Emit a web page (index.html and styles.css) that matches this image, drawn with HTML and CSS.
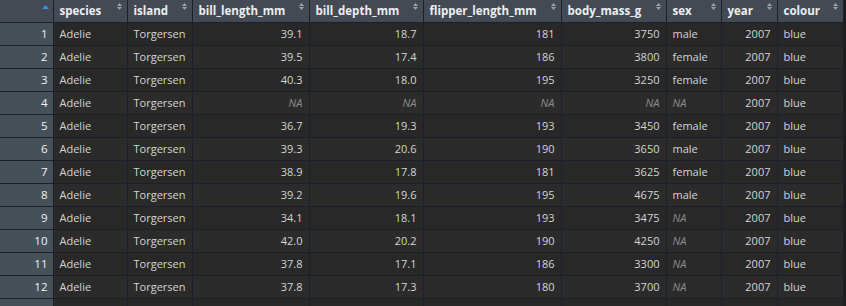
FILE: index.html
```html
<!DOCTYPE html>
<html>
<head>
<meta charset="utf-8">
<link rel="stylesheet" href="styles.css">
</head>
<body>
<div class="viewer">
<table class="grid">
<colgroup>
<col class="c-rn"><col class="c-species"><col class="c-island"><col class="c-bl"><col class="c-bd"><col class="c-fl"><col class="c-bm"><col class="c-sex"><col class="c-year"><col class="c-colour">
</colgroup>
<thead>
<tr>
<th class="rn-head"><div class="th-in th-right"><svg class="asc" width="7" height="4" viewBox="0 0 7 4"><polygon points="0,4 3.5,0 7,4" fill="#3d8ee8"/></svg></div></th>
<th><div class="th-in"><span>species</span><svg class="sort" width="5" height="7" viewBox="0 0 5 7"><polygon points="0,3 2.5,0 5,3" /><polygon points="0,4 2.5,7 5,4"/></svg></div></th>
<th><div class="th-in"><span>island</span><svg class="sort" width="5" height="7" viewBox="0 0 5 7"><polygon points="0,3 2.5,0 5,3" /><polygon points="0,4 2.5,7 5,4"/></svg></div></th>
<th><div class="th-in"><span>bill_length_mm</span><svg class="sort" width="5" height="7" viewBox="0 0 5 7"><polygon points="0,3 2.5,0 5,3" /><polygon points="0,4 2.5,7 5,4"/></svg></div></th>
<th><div class="th-in"><span>bill_depth_mm</span><svg class="sort" width="5" height="7" viewBox="0 0 5 7"><polygon points="0,3 2.5,0 5,3" /><polygon points="0,4 2.5,7 5,4"/></svg></div></th>
<th><div class="th-in"><span>flipper_length_mm</span><svg class="sort" width="5" height="7" viewBox="0 0 5 7"><polygon points="0,3 2.5,0 5,3" /><polygon points="0,4 2.5,7 5,4"/></svg></div></th>
<th><div class="th-in"><span>body_mass_g</span><svg class="sort" width="5" height="7" viewBox="0 0 5 7"><polygon points="0,3 2.5,0 5,3" /><polygon points="0,4 2.5,7 5,4"/></svg></div></th>
<th><div class="th-in"><span>sex</span><svg class="sort" width="5" height="7" viewBox="0 0 5 7"><polygon points="0,3 2.5,0 5,3" /><polygon points="0,4 2.5,7 5,4"/></svg></div></th>
<th><div class="th-in"><span>year</span><svg class="sort" width="5" height="7" viewBox="0 0 5 7"><polygon points="0,3 2.5,0 5,3" /><polygon points="0,4 2.5,7 5,4"/></svg></div></th>
<th><div class="th-in"><span>colour</span><svg class="sort" width="5" height="7" viewBox="0 0 5 7"><polygon points="0,3 2.5,0 5,3" /><polygon points="0,4 2.5,7 5,4"/></svg></div></th>
</tr>
</thead>
<tbody>
<tr><td class="rn">1</td><td>Adelie</td><td>Torgersen</td><td class="num">39.1</td><td class="num">18.7</td><td class="num">181</td><td class="num">3750</td><td>male</td><td class="num">2007</td><td>blue</td></tr>
<tr><td class="rn">2</td><td>Adelie</td><td>Torgersen</td><td class="num">39.5</td><td class="num">17.4</td><td class="num">186</td><td class="num">3800</td><td>female</td><td class="num">2007</td><td>blue</td></tr>
<tr><td class="rn">3</td><td>Adelie</td><td>Torgersen</td><td class="num">40.3</td><td class="num">18.0</td><td class="num">195</td><td class="num">3250</td><td>female</td><td class="num">2007</td><td>blue</td></tr>
<tr><td class="rn">4</td><td>Adelie</td><td>Torgersen</td><td class="num na">NA</td><td class="num na">NA</td><td class="num na">NA</td><td class="num na">NA</td><td class="na">NA</td><td class="num">2007</td><td>blue</td></tr>
<tr><td class="rn">5</td><td>Adelie</td><td>Torgersen</td><td class="num">36.7</td><td class="num">19.3</td><td class="num">193</td><td class="num">3450</td><td>female</td><td class="num">2007</td><td>blue</td></tr>
<tr><td class="rn">6</td><td>Adelie</td><td>Torgersen</td><td class="num">39.3</td><td class="num">20.6</td><td class="num">190</td><td class="num">3650</td><td>male</td><td class="num">2007</td><td>blue</td></tr>
<tr><td class="rn">7</td><td>Adelie</td><td>Torgersen</td><td class="num">38.9</td><td class="num">17.8</td><td class="num">181</td><td class="num">3625</td><td>female</td><td class="num">2007</td><td>blue</td></tr>
<tr><td class="rn">8</td><td>Adelie</td><td>Torgersen</td><td class="num">39.2</td><td class="num">19.6</td><td class="num">195</td><td class="num">4675</td><td>male</td><td class="num">2007</td><td>blue</td></tr>
<tr><td class="rn">9</td><td>Adelie</td><td>Torgersen</td><td class="num">34.1</td><td class="num">18.1</td><td class="num">193</td><td class="num">3475</td><td class="na">NA</td><td class="num">2007</td><td>blue</td></tr>
<tr><td class="rn">10</td><td>Adelie</td><td>Torgersen</td><td class="num">42.0</td><td class="num">20.2</td><td class="num">190</td><td class="num">4250</td><td class="na">NA</td><td class="num">2007</td><td>blue</td></tr>
<tr><td class="rn">11</td><td>Adelie</td><td>Torgersen</td><td class="num">37.8</td><td class="num">17.1</td><td class="num">186</td><td class="num">3300</td><td class="na">NA</td><td class="num">2007</td><td>blue</td></tr>
<tr><td class="rn">12</td><td>Adelie</td><td>Torgersen</td><td class="num">37.8</td><td class="num">17.3</td><td class="num">180</td><td class="num">3700</td><td class="na">NA</td><td class="num">2007</td><td>blue</td></tr>
<tr class="partial"><td class="rn"></td><td></td><td></td><td></td><td></td><td></td><td></td><td></td><td></td><td></td></tr>
</tbody>
</table>
</div>
</body>
</html>
```

FILE: styles.css
```css
html, body {
  margin: 0;
  padding: 0;
  background: #1e1e1e;
  overflow: hidden;
  width: 846px;
  height: 306px;
}
.viewer {
  width: 846px;
  height: 306px;
  overflow: hidden;
  background: #1e1e1e;
}
.grid {
  border-collapse: collapse;
  table-layout: fixed;
  width: 843px;
  font-family: "Open Sans", "DejaVu Sans", sans-serif;
  font-size: 11px;
  color: #d4d4d4;
}
.c-rn { width: 53px; }
.c-species { width: 74px; }
.c-island { width: 65px; }
.c-bl { width: 117px; }
.c-bd { width: 114px; }
.c-fl { width: 138px; }
.c-bm { width: 105px; }
.c-sex { width: 55px; }
.c-year { width: 56px; }
.c-colour { width: 66px; }

th {
  background: #434a54;
  color: #eceef0;
  font-weight: 700;
  font-size: 11.5px;
  height: 22px;
  padding: 0;
  text-align: left;
  border-right: 1px solid #19212c;
  border-bottom: 1px solid #19212c;
  vertical-align: top;
}
.th-in {
  display: flex;
  justify-content: space-between;
  align-items: flex-start;
  height: 22px;
  padding: 0 5px 0 6px;
  box-sizing: border-box;
}
.th-in span {
  line-height: 22px;
  white-space: nowrap;
}
.th-right {
  justify-content: flex-end;
  padding-right: 4px;
}
.sort {
  fill: #9aa3ad;
  margin-top: 3px;
  flex: none;
}
.asc {
  margin-top: 5px;
  flex: none;
}
td {
  height: 22px;
  padding: 0 6px;
  border-right: 1px solid #19212c;
  border-bottom: 1px solid #19212c;
  white-space: nowrap;
  overflow: hidden;
  line-height: 22px;
  background: #282828;
}
tbody tr:nth-child(even) td {
  background: #2b2b2b;
}
tbody tr td.rn {
  background: #465059;
  color: #f2f2f2;
  text-align: right;
  padding-right: 5px;
  font-size: 11.5px;
}
.num { text-align: right; }
.na {
  font-style: italic;
  color: #8c8c8c;
}
```
